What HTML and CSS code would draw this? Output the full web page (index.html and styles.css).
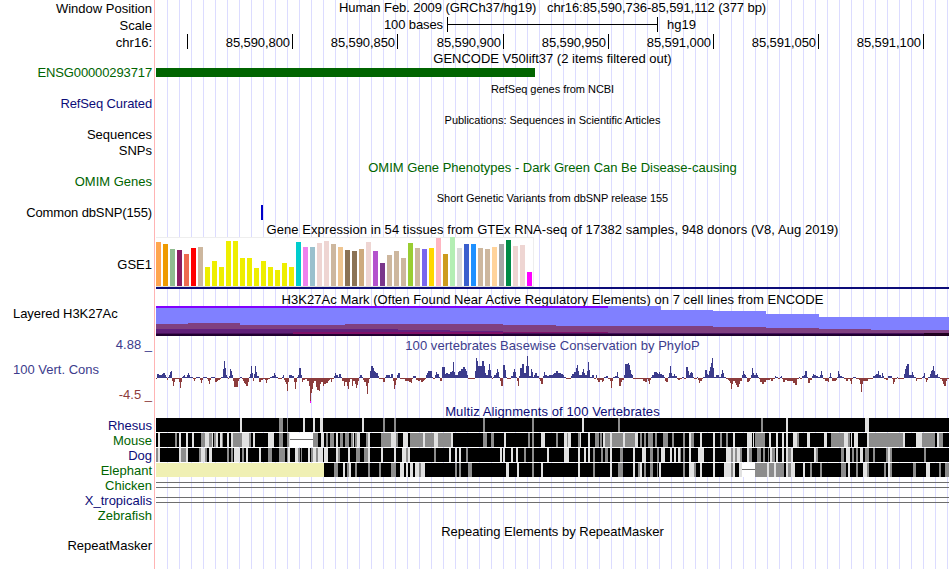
FILE: index.html
```html
<!DOCTYPE html>
<html lang="en">
<head>
    <meta charset="UTF-8">
    <title>Human chr16:85,590,736-85,591,112</title>
    <link rel="stylesheet" href="styles.css">
</head>
<body>

<div class="browser">
    <div class="row position">
        <div class="name">Window Position</div>
        <div class="title">Human Feb. 2009 (GRCh37/hg19) &nbsp; chr16:85,590,736-85,591,112 (377 bp)</div>
    </div>
    <div class="row scale">
        <div class="name">Scale</div>
        <div class="track">
            <span class="scale_size">100 bases</span>
            <span class="scale_bar"></span>
            <span class="scale_db">hg19</span>
        </div>
    </div>
    <div class="row ruler">
        <div class="name">chr16:</div>
        <div class="track">
            <span></span>
            <span>85,590,800</span>
            <span>85,590,850</span>
            <span>85,590,900</span>
            <span>85,590,950</span>
            <span>85,591,000</span>
            <span>85,591,050</span>
            <span>85,591,100</span>
        </div>
    </div>

    <div class="row head"><div class="title">GENCODE V50lift37 (2 items filtered out)</div></div>
    <div class="row item green tight">
        <div class="name">ENSG00000293717</div>
        <div class="track"><div class="gene"></div></div>
    </div>

    <div class="row head small"><div class="title">RefSeq genes from NCBI</div></div>
    <div class="row item navy tight"><div class="name">RefSeq Curated</div></div>

    <div class="row head small"><div class="title">Publications: Sequences in Scientific Articles</div></div>
    <div class="row item"><div class="name">Sequences</div></div>
    <div class="row item"><div class="name">SNPs</div></div>

    <div class="row head green"><div class="title">OMIM Gene Phenotypes - Dark Green Can Be Disease-causing</div></div>
    <div class="row item green"><div class="name">OMIM Genes</div></div>

    <div class="row head small"><div class="title">Short Genetic Variants from dbSNP release 155</div></div>
    <div class="row item tight">
        <div class="name">Common dbSNP(155)</div>
        <div class="track"><div class="snp"></div></div>
    </div>

    <div class="row head wide"><div class="title">Gene Expression in 54 tissues from GTEx RNA-seq of 17382 samples, 948 donors (V8, Aug 2019)</div></div>
    <div class="row gtex">
        <div class="name">GSE1</div>
        <div class="track">
            <div class="tissues" id="tissues"></div>
            <div class="gene_line"></div>
        </div>
    </div>

    <div class="row head wide"><div class="title">H3K27Ac Mark (Often Found Near Active Regulatory Elements) on 7 cell lines from ENCODE</div></div>
    <div class="row h3k">
        <div class="name left">Layered H3K27Ac</div>
        <svg class="track" width="793" height="30" shape-rendering="crispEdges">
            <path fill="#8080ff" d="M0 0H505V4H557V5H610V8H663V11H793V30H0Z"/>
            <path fill="#8000ff" d="M0 0H452V2H0Z"/>
            <path fill="#804080" d="M0 18H32V17H84V19H189V18H347V19H400V20H557V21H610V22H663V23H715V24H793V30H0Z"/>
            <path fill="#602080" d="M0 23H242V24H294V25H347V26H400V27H0Z"/>
            <path fill="#602078" d="M0 24H242V28H0Z"/>
            <path fill="#801068" d="M137 26H452V28H137Z"/>
            <path fill="#48105c" d="M0 27H137V28H0ZM347 27H793V28H347Z"/>
            <path fill="#200030" d="M0 28H793V30H0Z"/>
            <path fill="#200020" d="M768 27H793V30H768Z"/>
        </svg>
    </div>

    <div class="row cons">
        <div class="name">
            <span class="upper">4.88 _</span>
            <span class="left">100 Vert. Cons</span>
            <span class="lower">-4.5 _</span>
        </div>
        <div class="track">
            <div class="title wide">100 vertebrates Basewise Conservation by PhyloP</div>
            <svg id="phylop" width="793" height="52" shape-rendering="crispEdges"></svg>
        </div>
    </div>

    <div class="row multiz_head navy"><div class="title">Multiz Alignments of 100 Vertebrates</div></div>
    <div class="row species navy">
        <div class="name">Rhesus</div>
        <svg class="track" data-align="rhesus" width="793" height="14" shape-rendering="crispEdges"></svg>
    </div>
    <div class="row species green">
        <div class="name">Mouse</div>
        <svg class="track" data-align="mouse" width="793" height="14" shape-rendering="crispEdges"></svg>
    </div>
    <div class="row species navy">
        <div class="name">Dog</div>
        <svg class="track" data-align="dog" width="793" height="14" shape-rendering="crispEdges"></svg>
    </div>
    <div class="row species green">
        <div class="name">Elephant</div>
        <svg class="track" data-align="elephant" width="793" height="14" shape-rendering="crispEdges"></svg>
    </div>
    <div class="row species green">
        <div class="name">Chicken</div>
        <div class="track"><div class="double"></div></div>
    </div>
    <div class="row species navy">
        <div class="name">X_tropicalis</div>
        <div class="track"><div class="double"></div></div>
    </div>
    <div class="row species green"><div class="name">Zebrafish</div></div>

    <div class="row repeat_head"><div class="title">Repeating Elements by RepeatMasker</div></div>
    <div class="row item"><div class="name">RepeatMasker</div></div>
</div>

<script src="tracks.js"></script>
</body>
</html>
```
FILE: styles.css
```css
* {
    margin: 0;
    padding: 0;
    box-sizing: border-box;
}

body {
    background: #fff;
    color: #000;
    font: 13px/16px "Liberation Sans", Arial, sans-serif;
}

/* label column, pink divider, then a guide line every 12px */
.browser {
    width: 949px;
    height: 569px;
    overflow: hidden;
    background:
        linear-gradient(to right, #fff 154px, #ffb4b4 154px, #ffb4b4 155px, #fff 155px, #fff 156px, transparent 156px),
        linear-gradient(to right, #dcdcff 1px, transparent 1px) 11px 0 / 12px 100%;
}

.row {
    display: flex;
    white-space: nowrap;
}

.name {
    width: 156px;
    flex: none;
    padding-right: 4px;
    text-align: right;
}

.track {
    display: block;
    width: 793px;
    flex: none;
}

.title {
    width: 793px;
    margin-left: auto;
    text-align: center;
}

.green {
    color: #006400;
}

.navy {
    color: #0c0c78;
}

.tight {
    letter-spacing: -0.12px;
}

.wide {
    letter-spacing: 0.05px;
}

.position {
    height: 17px;
    line-height: 15px;
}

.position .name {
    line-height: 18px;
}

.position .title {
    margin-left: 0;
    letter-spacing: -0.07px;
}

.scale {
    height: 17px;
}

.scale .name {
    line-height: 18px;
}

.scale .track {
    display: flex;
}

.scale_size {
    width: 291px;
    padding-right: 4px;
    text-align: right;
    letter-spacing: -0.1px;
}

.scale_bar {
    width: 211px;
    height: 15px;
    border: solid #000;
    border-width: 0 1px;
    background: linear-gradient(#000, #000) 0 7px / 100% 1px no-repeat;
}

.scale_db {
    margin-left: 9px;
}

.ruler {
    height: 16px;
    line-height: 17px;
}

.ruler .track {
    display: grid;
    grid-template-columns: 32px 105px 105px 106px 105px 105px 105px 105px;
}

.ruler .track span {
    height: 15px;
    padding-right: 2px;
    border-right: 1px solid #000;
    text-align: right;
    letter-spacing: -0.08px;
}

.head {
    height: 15px;
    line-height: 17px;
}

.small {
    font-size: 11px;
    letter-spacing: -0.04px;
}

.item {
    height: 16px;
}

.gene {
    width: 379px;
    height: 9px;
    margin-top: 3px;
    background: #006400;
}

.snp {
    width: 2px;
    height: 15px;
    margin-left: 105px;
    background: #0000c8;
}

.gtex {
    height: 55px;
}

.gtex .name {
    line-height: 58px;
}

.gtex .track {
    padding-top: 1px;
}

.tissues {
    display: flex;
    align-items: flex-end;
    gap: 2px;
    width: 378px;
    height: 50px;
    background: #fff;
    border: solid #eee;
    border-width: 1px 1px 1px 0;
    border-bottom-color: #dcdcdc;
}

.tissues i {
    width: 5px;
    flex: none;
}

.gene_line {
    height: 2px;
    background: #0c0c78;
}

.h3k {
    height: 31px;
}

.name.left {
    padding-left: 13px;
    text-align: left;
    letter-spacing: -0.06px;
}

.cons {
    height: 67px;
    color: #3c3c8c;
}

.cons .name {
    display: flex;
    flex-direction: column;
}

.cons .left {
    margin-top: 9px;
    padding-left: 13px;
    text-align: left;
}

.cons .lower {
    margin-top: 9px;
    color: #8c3c3c;
}

.cons .title {
    height: 15px;
    line-height: 17px;
}

.cons svg {
    display: block;
}

.multiz_head {
    height: 14px;
    line-height: 15px;
    letter-spacing: 0.1px;
}

.species {
    height: 15px;
    line-height: 16px;
}

.double {
    height: 6px;
    margin-top: 4px;
    border: solid #6e6e6e;
    border-width: 1px 0;
}

.repeat_head {
    height: 15px;
    line-height: 18px;
}
```
FILE: tracks.js
```js
const NS = 'http://www.w3.org/2000/svg';

function addPath(svg, fill, d) {
    let path = document.createElementNS(NS, 'path');
    path.setAttribute('fill', fill);
    path.setAttribute('d', d);
    svg.appendChild(path);
}

function box(x, y, w, h) {
    return 'M' + x + ' ' + y + 'h' + w + 'v' + h + 'h-' + w + 'Z';
}

// GTEx: height and colour of each tissue
const tissues = '44 FFA54F,42 EE9A00,37 8FBC8F,36 8B1C62,32 EE6A50,38 FF0000,39 CDB79E,' +
    '19 EEEE00,25 EEEE00,19 EEEE00,45 EEEE00,45 EEEE00,28 EEEE00,28 EEEE00,18 EEEE00,25 EEEE00,19 EEEE00,16 EEEE00,23 EEEE00,19 EEEE00,' +
    '44 00CDCD,39 EE82EE,39 9AC0CD,43 EED5D2,45 EED5D2,42 CDB79E,39 EEC591,36 8B7355,35 8B7355,37 CDAA7D,44 EED5D2,' +
    '35 B452CD,23 7A378B,31 CDB79E,35 CDB79E,28 CDB79E,43 9ACD32,38 CDB79E,37 7A67EE,38 FFD700,48 FFB6C1,32 CD9B1D,' +
    '49 B4EEB4,38 D9D9D9,42 3A5FCD,42 1E90FF,38 CDB79E,37 CDB79E,39 FFD39B,42 A6A6A6,46 008B45,40 EED5D2,41 EED5D2,14 FF00FF';

tissues.split(',').forEach(t => {
    let [height, color] = t.split(' ');
    let bar = document.createElement('i');
    bar.style.height = height + 'px';
    bar.style.background = '#' + color;
    document.getElementById('tissues').appendChild(bar);
});

// PhyloP: start:value, each value holds until the next start
const phylop = '0:-1 1:4 3:3 6:4 7:5 9:3 10:1 11:-2 12:1 13:3 14:6 15:7 16:-3 17:-8 18:-4 19:-1 23:-4 24:-10 25:-4 26:1 27:2 28:3 29:1 31:3 32:5 33:3 34:1 37:-1 38:-3 39:-1 ' +
    '40:1 44:-2 45:-5 46:-2 47:1 51:-1 52:-3 53:-6 54:-2 55:1 59:-4 61:-3 62:-2 64:-1 65:1 67:9 68:17 69:10 70:3 71:1 72:-1 73:2 74:9 75:7 76:3 77:-3 78:-9 82:-3 83:-1 84:1 86:-1 ' +
    '87:-3 88:-5 89:-6 90:-8 92:-4 93:1 94:4 95:12 96:5 97:-3 98:4 99:12 100:6 101:2 103:-4 105:-2 107:-1 109:-2 110:-5 111:-2 112:-1 114:1 116:2 118:5 119:3 120:1 122:-1 126:1 ' +
    '127:3 128:-2 129:-4 130:-6 131:-13 132:-4 133:3 136:2 138:-4 139:-11 140:-4 141:1 142:3 143:10 145:3 146:-4 147:-2 149:-1 151:-3 153:-8 154:-24 155:-15 156:-11 157:-5 158:-3 ' +
    '160:-9 161:-12 163:-13 164:-6 165:-4 167:-8 168:-6 170:-5 172:-3 173:-2 174:-1 175:-4 176:-1 178:2 179:5 180:3 182:1 183:4 185:1 186:-3 188:-8 189:-4 191:-8 192:-11 193:-4 ' +
    '194:-1 196:-8 197:-3 199:-6 200:-10 201:-7 202:-3 203:1 204:3 206:1 207:-2 208:-4 210:-8 211:-16 212:-5 213:-1 214:7 215:12 217:10 218:7 219:6 220:5 222:2 223:-1 227:-4 229:1 ' +
    '230:3 234:1 235:4 237:-3 238:-11 239:-7 240:-2 241:3 242:5 244:-1 249:-3 253:-4 255:-5 256:-1 257:2 260:-2 262:-3 264:-2 265:-4 267:-3 268:-2 269:-1 270:3 271:5 272:7 276:1 ' +
    '277:-1 279:3 280:6 281:4 283:1 284:-3 286:11 289:4 290:5 292:4 294:6 296:7 297:16 298:6 299:3 302:6 303:7 305:9 307:11 309:9 310:7 311:3 312:-1 319:7 320:20 321:17 322:12 ' +
    '326:17 328:12 329:5 330:3 332:8 333:14 334:8 335:2 336:-1 337:1 338:3 340:5 341:9 342:6 343:1 344:-3 345:-8 347:13 349:8 350:1 351:-1 355:2 357:6 358:9 359:6 360:1 361:-3 ' +
    '362:-8 363:2 364:10 366:14 368:5 370:12 371:22 372:12 373:2 375:9 376:6 377:1 378:3 379:5 381:2 383:-1 384:-3 385:-6 387:2 388:6 389:3 391:2 393:3 397:4 398:5 400:7 402:5 ' +
    '405:4 407:3 408:1 410:-1 415:2 416:4 418:6 420:10 421:13 422:7 423:3 426:6 427:9 428:5 429:3 431:7 432:16 433:8 434:1 436:3 438:-1 440:3 441:-2 442:-4 444:-2 446:-4 447:-3 ' +
    '448:1 450:2 452:-1 454:-3 455:-10 456:-3 457:1 459:2 461:6 462:1 463:-8 465:-4 466:-2 468:3 469:14 472:15 473:13 474:8 475:4 476:3 477:-1 487:-3 489:-4 491:-1 492:-3 493:-6 ' +
    '494:-2 495:1 496:3 498:6 501:5 502:4 503:6 504:4 506:3 508:1 509:-3 510:-4 512:1 513:5 514:12 515:5 516:2 518:4 519:2 521:-1 522:-2 524:-1 526:1 528:-1 530:11 532:7 533:3 ' +
    '534:5 535:6 536:5 537:1 538:-1 541:1 542:-2 543:-5 544:-3 546:-1 547:1 549:8 551:4 552:3 553:7 554:11 555:15 556:20 557:10 558:1 560:3 563:1 565:4 566:8 567:5 568:1 570:-1 ' +
    '572:-2 573:-3 574:-5 575:-11 576:-6 577:-3 579:-5 580:-7 581:-9 583:-6 584:-3 586:3 587:7 588:4 589:3 590:1 591:-4 593:-3 594:-1 595:3 596:10 597:5 598:3 600:5 601:3 602:1 ' +
    '603:-1 604:-4 606:-6 608:-4 610:-2 614:-1 615:-3 617:-1 619:2 620:1 622:-1 624:1 625:2 626:-1 627:-4 629:-2 631:-3 637:-5 639:-7 641:-1 643:1 644:-1 646:2 648:3 649:7 651:1 ' +
    '652:-5 654:-2 656:2 657:4 658:3 660:2 662:1 664:3 665:7 666:3 667:-1 669:-3 672:-4 673:1 674:5 675:1 676:-3 680:-2 681:1 682:7 683:4 684:2 686:1 688:-1 690:-3 692:-1 694:-3 ' +
    '695:-6 696:-1 697:1 700:-1 703:-2 704:-6 705:-14 706:-6 707:-3 712:-1 717:2 719:3 720:4 722:7 723:3 725:1 726:5 727:2 728:-1 730:-2 732:2 736:-1 737:-6 738:-4 739:-1 741:1 ' +
    '742:-1 748:4 749:9 750:12 751:14 753:3 756:6 757:3 758:1 760:-3 761:-1 766:1 767:2 768:5 769:-1 770:-4 771:-2 772:1 774:4 775:7 776:8 777:12 778:7 779:3 781:4 782:1 784:-1 ' +
    '786:-3 787:-6 788:-8 790:-3 791:-1 793:0';

let svg = document.getElementById('phylop');
let zero = 26;
let up = '';
let down = '';
let steps = phylop.split(' ').map(s => s.split(':').map(Number));
for (let i = 0; i < steps.length - 1; i++) {
    let [x, v] = steps[i];
    let w = steps[i + 1][0] - x;
    if (v > 0) {
        up += box(x, zero - v, w, v);
    } else {
        down += box(x, zero, w, -v);
    }
}
addPath(svg, '#3c3c8c', up);
addPath(svg, '#8c3c3c', down);
// clipped base
addPath(svg, '#ff00ff', box(154, zero + 23, 1, 2));

// Multiz: x,width of the stripes over black; gap is unaligned, missing is no data
const align = {
    rhesus: {
        gray: '123,4 131,1 227,2 238,2 327,2 376,2 462,2 605,2',
        light: '84,2 147,2 157,2 164,3 206,2 426,2 630,2 709,4'
    },
    mouse: {
        gray: '19,2 45,4 53,3 58,2 66,1 77,9 93,2 123,4 131,2 157,5 170,2 174,4 184,3 189,4 195,2 199,2 210,2 225,10 240,2 254,13 269,9 282,13 327,4 335,3 372,2 376,2 400,2 411,1 422,2 439,4 444,2 449,5 456,11 469,10 484,2 488,2 492,5 499,2 507,5 516,2 527,2 535,3 564,2 570,2 599,10 641,2 675,13 692,2 713,34 766,13 783,4',
        light: '2,2 23,2 30,2 36,2 49,4 56,1 60,2 64,2 71,2 75,2 86,4 90,3 97,2 112,6 133,1 165,3 180,2 197,1 201,3 212,2 235,5 247,5 267,2 278,4 295,2 348,2 385,4 408,3 412,3 424,1 432,2 447,2 454,2 467,2 479,3 533,2 544,2 557,2 577,2 591,5 597,1 613,2 620,2 626,2 630,2 637,4 651,3 668,3 688,4 695,1 698,4 711,2 747,2 760,6 781,2',
        gap: '134,23'
    },
    dog: {
        gray: '0,2 25,5 43,2 49,2 71,2 75,2 86,2 112,4 123,6 131,1 142,2 145,1 155,2 160,2 182,2 200,4 208,4 250,2 278,2 310,2 368,2 376,2 437,2 445,2 449,3 464,3 494,3 501,2 524,1 527,2 575,2 579,2 584,2 593,3 601,4 607,2 612,1 616,3 632,3 660,2 685,3 696,2 700,2 709,4 717,2 730,2 734,2 768,2',
        light: '2,2 23,2 30,2 45,4 53,3 78,6 90,2 103,2 132,2 139,3 152,2 157,3 162,5 168,4 180,2 192,2 212,2 225,2 238,2 246,4 252,2 293,2 299,2 303,2 344,2 347,2 355,2 360,2 391,2 408,5 422,2 428,2 432,2 454,2 477,2 486,4 505,4 514,2 518,2 522,2 533,2 542,6 557,2 570,5 577,2 581,3 591,2 614,2 620,2 626,2 630,2 635,2 658,2 690,4 704,3 732,2'
    },
    elephant: {
        gray: '178,4 191,2 199,2 212,2 223,2 235,5 263,2 299,2 303,2 312,4 376,2 437,2 462,5 482,2 488,2 494,3 501,1 527,2 538,2 575,2 599,12 613,5 620,8 632,3 654,2 664,2 685,5 700,2 711,2 728,2 734,2 757,3 783,2 789,4',
        light: '187,2 193,2 244,4 250,2 254,3 259,4 265,4 350,3 361,2 385,2 422,2 454,2 477,2 484,2 503,2 533,5 544,2 557,2 568,7 577,2 583,3 611,2 618,2 630,2 635,4 647,2 692,2 707,4 732,2 770,4',
        gap: '586,13',
        missing: '0,168'
    }
};

function stripes(list) {
    return list.split(' ').map(s => {
        let [x, w] = s.split(',').map(Number);
        return box(x, 0, w, 14);
    }).join('');
}

document.querySelectorAll('[data-align]').forEach(row => {
    let data = align[row.dataset.align];
    addPath(row, '#000', box(0, 0, 793, 14));
    addPath(row, '#8c8c8c', stripes(data.gray));
    addPath(row, '#e1e1e1', stripes(data.light));
    if (data.missing) {
        addPath(row, '#f0f0b4', stripes(data.missing));
    }
    if (data.gap) {
        let [x, w] = data.gap.split(',').map(Number);
        addPath(row, '#fff', stripes(data.gap));
        addPath(row, '#6e6e6e', box(x, 6, w, 1));
    }
});
```
